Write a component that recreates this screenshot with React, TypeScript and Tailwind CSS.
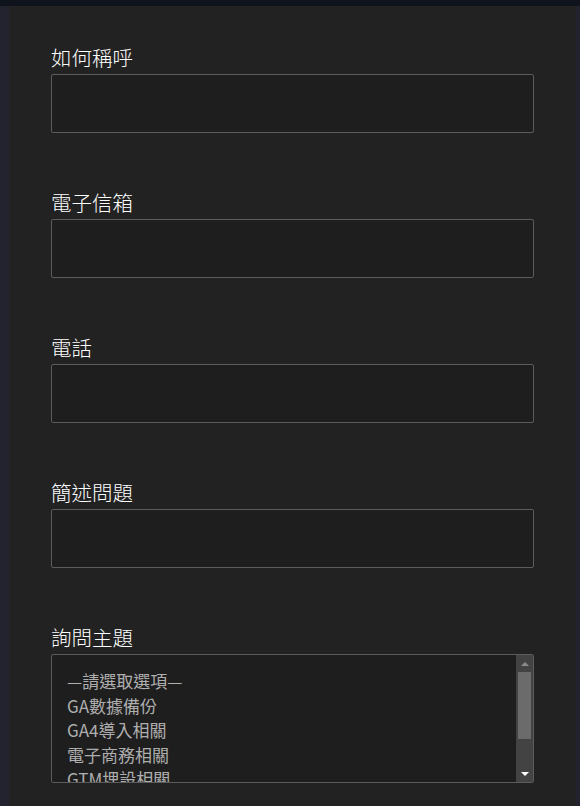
import React from "react";

const fields = ["如何稱呼", "電子信箱", "電話", "簡述問題"];
const options = ["—請選取選項—", "GA數據備份", "GA4導入相關", "電子商務相關", "GTM埋設相關"];

export default function App() {
  return (
    <div
      className="w-[580px] h-[806px] overflow-hidden bg-[#0f131c] flex flex-col"
      style={{ fontFamily: '"Noto Sans CJK TC", "Noto Sans", sans-serif' }}
    >
      <div className="h-[6px] shrink-0" />
      <div className="flex flex-1 min-h-0">
        <div className="w-[9px] bg-[#23232f] shrink-0" />
        <div className="flex-1 bg-[#222222] pl-[42px] pr-[42px] pt-[39px]">
          {fields.map((f) => (
            <div key={f} className="mb-[57px]">
              <div className="h-[24px] leading-[24px] text-[20.5px] font-light text-white mb-[5px]">{f}</div>
              <div className="h-[59px] w-[483px] bg-[#1e1e1e] border border-[#5c5c5c] rounded-[2px]" />
            </div>
          ))}
          <div>
            <div className="h-[24px] leading-[24px] text-[20.5px] font-light text-white mb-[5px]">詢問主題</div>
            <div className="h-[129px] w-[483px] bg-[#1e1e1e] border border-[#5c5c5c] rounded-[2px] flex overflow-hidden">
              <div className="flex-1 pl-[15px] pt-[14px] overflow-hidden">
                {options.map((o) => (
                  <div key={o} className="h-[24.5px] leading-[24.5px] text-[17px] text-[#aeaeae] whitespace-nowrap">
                    {o}
                  </div>
                ))}
              </div>
              <div className="w-[17px] bg-[#434343] flex flex-col items-center shrink-0">
                <div className="h-[17px] flex items-center justify-center">
                  <div className="w-0 h-0 border-l-[4px] border-r-[4px] border-b-[4px] border-l-transparent border-r-transparent border-b-[#8a8a8a]" />
                </div>
                <div className="w-[13px] h-[67px] bg-[#6b6b6b]" />
                <div className="flex-1" />
                <div className="h-[17px] flex items-center justify-center">
                  <div className="w-0 h-0 border-l-[4px] border-r-[4px] border-t-[4px] border-l-transparent border-r-transparent border-t-white" />
                </div>
              </div>
            </div>
          </div>
        </div>
        <div className="w-[4px] bg-[#23232f] shrink-0" />
      </div>
    </div>
  );
}
